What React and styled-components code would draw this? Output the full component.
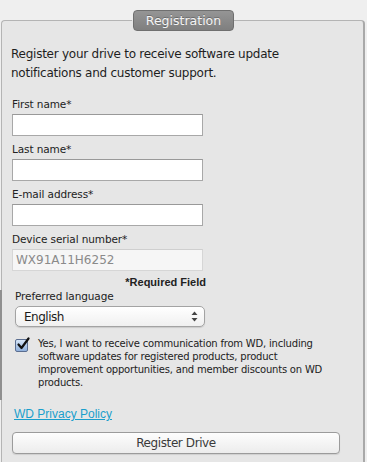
import React from "react";
import styled, { createGlobalStyle } from "styled-components";

const Global = createGlobalStyle`
  html, body { margin: 0; padding: 0; background: #efefef; }
  body { font-family: "DejaVu Sans", "Liberation Sans", sans-serif; color: #222; }
  * { box-sizing: border-box; }
`;

const Page = styled.div`
  width: 367px;
  height: 462px;
  overflow: hidden;
  background: #efefef;
  padding: 10px 2px 0 1px;
  position: relative;
`;

const Panel = styled.fieldset`
  margin: 0;
  padding: 0 0 10px 0;
  border: 1px solid #b4b4b4;
  border-right: 2px solid #a9a9a9;
  border-radius: 4px 4px 0 0;
  background: #e6e6e6;
  height: 470px;
  min-width: 0;
`;

const Legend = styled.legend`
  margin: 0 auto;
  padding: 0;
  width: 101px;
  height: 21px;
  border-radius: 4px;
  border: 1px solid #6f6f6f;
  background: linear-gradient(#959595, #7f7f7f);
  color: #f4f4f4;
  font-size: 12.5px;
  line-height: 19px;
  text-align: center;
  text-shadow: 0 -1px 0 rgba(0, 0, 0, 0.25);
  transform: translateX(1px);
`;

const Intro = styled.p`
  margin: 14px 0 0 9px;
  font-size: 12px;
  letter-spacing: -0.25px;
  line-height: 19px;
  color: #1e1e1e;
`;

const Form = styled.div`
  display: flex;
  flex-direction: column;
  padding: 0 0 0 10px;
  margin-top: 14px;
`;

const Label = styled.label`
  font-size: 10.5px;
  letter-spacing: -0.1px;
  line-height: 14px;
  color: #222;
  margin-bottom: 3px;
  display: block;
`;

const Field = styled.div`
  margin-bottom: ${(p) => (p.$mb ?? 6)}px;
`;

const Input = styled.input`
  width: 191px;
  height: 22px;
  border: 1px solid ${(p) => (p.$light ? "#d6d6d6" : "#a8a8a8")};
  border-top-color: ${(p) => (p.$light ? "#cfcfcf" : "#999")};
  background: ${(p) => (p.$light ? "#f6f6f6" : "#fff")};
  font-family: "DejaVu Sans", sans-serif;
  font-size: 12px;
  color: #8a8a8a;
  padding: 0 3px;
  outline: none;
  margin: 0;
  display: block;
`;

const Required = styled.div`
  width: 194px;
  text-align: right;
  font-family: "Liberation Sans", Arial, sans-serif;
  font-size: 11px;
  font-weight: bold;
  line-height: 14px;
  margin-top: 4px;
`;

const LangBlock = styled.div`
  padding-left: 3px;
`;

const SelectBox = styled.div`
  width: 190px;
  height: 21px;
  border: 1px solid #a3a3a3;
  border-radius: 5px;
  background: linear-gradient(#ffffff, #f0f0f0);
  box-shadow: 0 1px 1px rgba(0, 0, 0, 0.12);
  display: flex;
  align-items: center;
  justify-content: space-between;
  padding: 0 6px 0 8px;
  font-size: 12px;
  letter-spacing: -0.5px;
  color: #1a1a1a;
`;

const Arrows = styled.svg`
  width: 7px;
  height: 11px;
`;

const ConsentRow = styled.div`
  display: flex;
  gap: 10px;
  margin-top: 12px;
  padding-left: 3px;
`;

const CheckBox = styled.div`
  flex: none;
  width: 13px;
  height: 13px;
  border: 1px solid #5b6e90;
  border-radius: 2px;
  background: linear-gradient(#d6e5f7, #8fb0dc);
  position: relative;
`;

const Check = styled.svg`
  position: absolute;
  left: 0px;
  top: -3px;
  width: 14px;
  height: 14px;
`;

const ConsentText = styled.p`
  margin: -2px 0 0 0;
  width: 292px;
  font-size: 10px;
  letter-spacing: -0.2px;
  line-height: 13px;
  color: #222;
`;

const PolicyLink = styled.a`
  display: block;
  margin-top: 18px;
  margin-left: 2px;
  font-family: "Liberation Sans", Arial, sans-serif;
  font-size: 12px;
  line-height: 14px;
  color: #1a9fcc;
  text-decoration: underline;
  align-self: flex-start;
`;

const Button = styled.button`
  margin-top: 11px;
  width: 328px;
  height: 22px;
  border: 1px solid #9b9b9b;
  border-radius: 4px;
  background: linear-gradient(#fdfdfd, #ececec);
  box-shadow: 0 1px 1px rgba(0, 0, 0, 0.1);
  font-family: "DejaVu Sans", sans-serif;
  font-size: 12px;
  letter-spacing: -0.4px;
  color: #3a3a3a;
  padding: 0;
`;

const ScrollMark = styled.div`
  position: absolute;
  left: 0;
  top: 290px;
  width: 2px;
  height: 110px;
  background: #8f8f8f;
`;

export default function App() {
  return (
    <Page>
      <Global />
      <Panel>
        <Legend>Registration</Legend>
        <Intro>
          Register your drive to receive software update
          <br />
          notifications and customer support.
        </Intro>
        <Form>
          <Field>
            <Label>First name*</Label>
            <Input />
          </Field>
          <Field>
            <Label>Last name*</Label>
            <Input />
          </Field>
          <Field>
            <Label>E-mail address*</Label>
            <Input />
          </Field>
          <Field $mb={0}>
            <Label>Device serial number*</Label>
            <Input $light readOnly value="WX91A11H6252" />
          </Field>
          <Required>*Required Field</Required>
          <LangBlock>
            <Label>Preferred language</Label>
            <SelectBox>
              <span>English</span>
              <Arrows viewBox="0 0 7 11">
                <path d="M3.5 0.5 L6.5 4 L0.5 4 Z" fill="#444" />
                <path d="M3.5 10.5 L6.5 7 L0.5 7 Z" fill="#444" />
              </Arrows>
            </SelectBox>
          </LangBlock>
          <ConsentRow>
            <CheckBox>
              <Check viewBox="0 0 14 14">
                <path d="M2.5 7.5 L5.5 11 L12.5 1.5" fill="none" stroke="#111" strokeWidth="2.2" strokeLinecap="round" strokeLinejoin="round" />
              </Check>
            </CheckBox>
            <ConsentText>
              Yes, I want to receive communication from WD, including software updates for registered products, product improvement opportunities, and member discounts on WD products.
            </ConsentText>
          </ConsentRow>
          <PolicyLink href="#">WD Privacy Policy</PolicyLink>
          <Button>Register Drive</Button>
        </Form>
      </Panel>
      <ScrollMark />
    </Page>
  );
}
